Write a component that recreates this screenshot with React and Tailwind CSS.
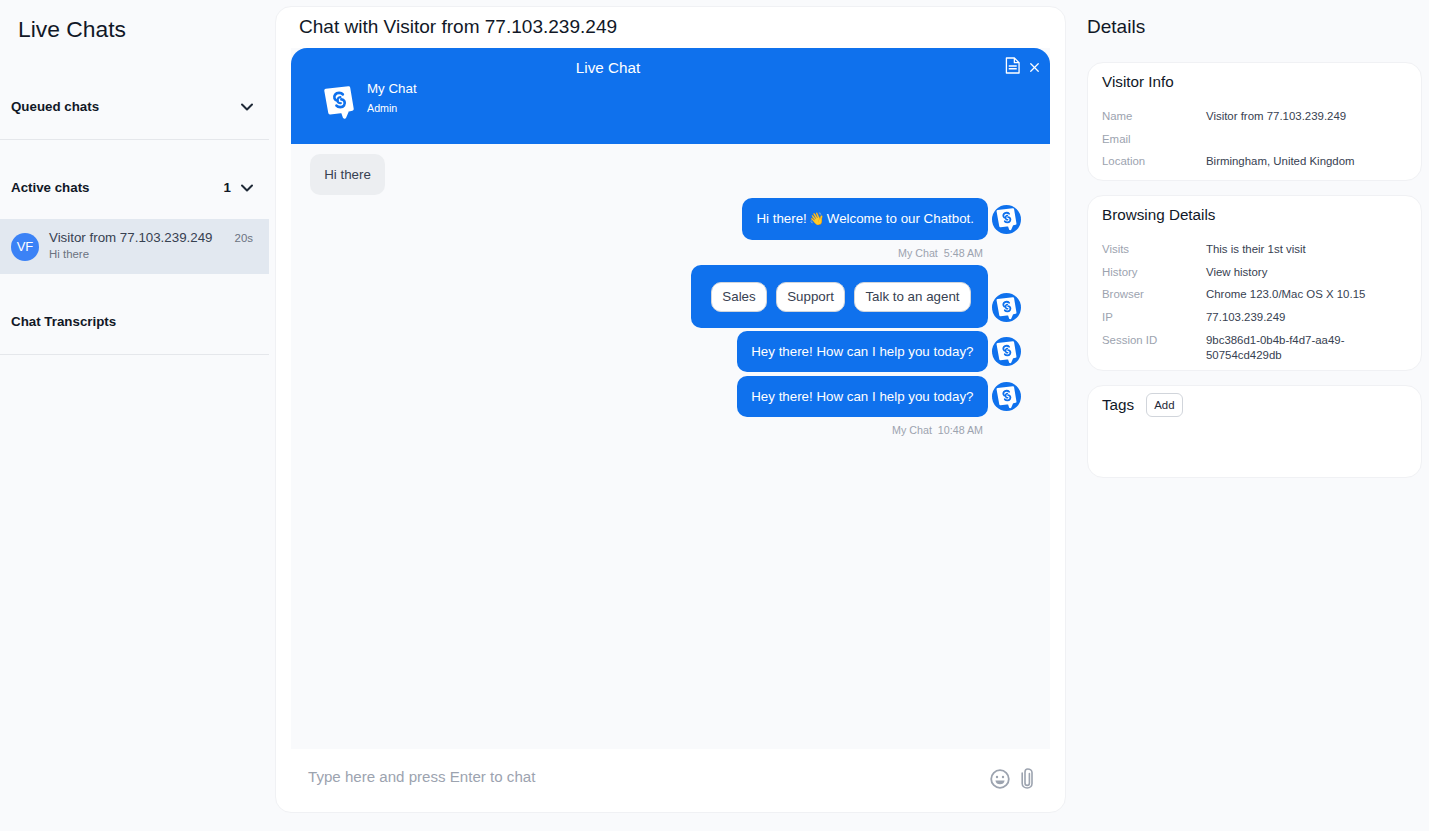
import React from "react";
import { ChevronDown, X } from "lucide-react";

function Logo({ size = 34, bg = "#fff", fg = "#0f71ed" }) {
  return (
    <svg width={size} height={size * 38 / 34} viewBox="0 0 34 38" className="shrink-0">
      <path d="M4 7.5 L26.5 5 L30 26 L25.5 27 L22.5 34 L20.5 28.2 L8 29.8 Z" fill={bg} stroke={bg} strokeWidth="3.5" strokeLinejoin="round" />
      <path d="M20.8 11.4 C19.4 9.6 15 9.2 13.2 11.6 C11.2 14.2 12.6 17.4 15.5 17.6" fill="none" stroke={fg} strokeWidth="2.7" strokeLinecap="round" />
      <path d="M14.5 22.6 C16.2 24.6 20.4 24.8 22 22.4 C23.8 19.6 22.2 16.4 19.4 16.4" fill="none" stroke={fg} strokeWidth="2.7" strokeLinecap="round" />
      <path d="M18.4 14.2 C16.4 14.3 15.4 15.6 15.5 17.6 C15.6 19.4 17 20.4 18.8 20.2" fill="none" stroke={fg} strokeWidth="2.2" strokeLinecap="round" />
    </svg>
  );
}

function BotAvatar() {
  return (
    <div className="w-[29px] h-[29px] rounded-full bg-[#0f71ed] flex items-center justify-center shrink-0">
      <Logo size={23} />
    </div>
  );
}

function Section({ title, right, h }) {
  return (
    <div className={`flex items-center justify-between pl-[11px] pr-[12px] ${h}`}>
      <span className="font-bold text-[13.33px] text-[#111827] leading-5">{title}</span>
      <div className="flex items-center gap-[6px]">
        {right && <span className="font-bold text-[13.33px] text-[#111827]">{right}</span>}
        {right !== null && <ChevronDown size={20} strokeWidth={2.4} className="text-[#1f2937]" />}
      </div>
    </div>
  );
}

function InfoRow({ label, value }) {
  return (
    <div className="flex items-start text-[11.43px] leading-[15px] py-[3.9px]">
      <div className="w-[104px] shrink-0 text-[#9ca3af]">{label}</div>
      <div className="text-[#374151] w-[160px]">{value}</div>
    </div>
  );
}

function Card({ className, children }) {
  return <div className={`bg-white border border-[#f0f1f4] rounded-[16px] px-[14px] ${className}`}>{children}</div>;
}

function Bubble({ children, className = "" }) {
  return (
    <div className={`bg-[#0f71ed] text-white text-[13.33px] leading-5 rounded-[10px] ${className}`}>{children}</div>
  );
}

function Reply({ children }) {
  return (
    <span className="bg-white text-[#374151] text-[13.33px] leading-5 rounded-[10px] border border-[#d1d5db] px-[10.5px] py-[4px]">{children}</span>
  );
}

export default function App() {
  return (
    <div className="w-[1429px] h-[831px] overflow-hidden bg-[#f9fafc] flex font-['Liberation_Sans',sans-serif] text-[#111827]">
      {/* Left */}
      <aside className="w-[269px] shrink-0 mr-[6px]">
        <h1 className="pl-[18px] pt-[14px] text-[22.86px] leading-[30px] text-[#111827] h-[75px]">Live Chats</h1>
        <div className="border-b border-[#e5e7eb] h-[65px]">
          <Section title="Queued chats" right="" h="h-[63px]" />
        </div>
        <div className="mt-[17px]">
          <Section title="Active chats" right="1" h="h-[62px]" />
          <div className="flex items-center bg-[#e2e8f0] h-[55px] pl-[11px] pr-[16px] pb-[2px]">
            <div className="w-[28px] h-[28px] mt-[2px] rounded-full bg-[#3b82f6] text-white text-[13px] flex items-center justify-center shrink-0">VF</div>
            <div className="ml-[10px] flex-1 min-w-0">
              <div className="text-[13.33px] leading-[17px] text-[#374151]">Visitor from 77.103.239.249</div>
              <div className="text-[11.43px] leading-[16px] text-[#6b7280]">Hi there</div>
            </div>
            <div className="text-[11.43px] text-[#6b7280] self-start mt-[11px]">20s</div>
          </div>
        </div>
        <div className="mt-[17px] border-b border-[#e5e7eb] h-[64px]">
          <Section title="Chat Transcripts" right={null} h="h-[62px]" />
        </div>
      </aside>

      {/* Center */}
      <main className="w-[791px] shrink-0 mt-[6px] h-[807px] bg-white border border-[#f0f1f4] rounded-[16px] px-[15px] flex flex-col">
        <h2 className="text-[19.05px] leading-[28px] text-[#111827] pl-[8px] pt-[6px] h-[41px]">Chat with Visitor from 77.103.239.249</h2>
        <div className="bg-[#f9fafc] h-[701px] flex flex-col shrink-0">
          <div className="relative h-[96px] bg-[#0f71ed] rounded-t-[16px] text-white shrink-0">
            <div className="text-center text-[15.24px] leading-5 pt-[10px] pr-[125px]">Live Chat</div>
            <div className="absolute left-[31px] top-[35px]"><Logo size={34} /></div>
            <div className="absolute left-[76px] top-[32px]">
              <div className="text-[13.33px] leading-[18px]">My Chat</div>
              <div className="text-[10.7px] leading-[14px] mt-[3px]">Admin</div>
            </div>
            <svg width="15" height="17" viewBox="0 0 16 18" fill="none" stroke="#fff" strokeWidth="1.4" className="absolute left-[714px] top-[9px]">
              <path d="M1.5 1 H10 L15 6 V17 H1.5 Z" strokeLinejoin="round" />
              <path d="M10 1 V6 H15" strokeLinejoin="round" />
              <path d="M4 9.5 H12.5 M4 12.5 H12.5" strokeWidth="1.6" />
            </svg>
            <X size={15} strokeWidth={2} className="absolute right-[8px] top-[12px]" />
          </div>
          <div className="flex-1 pl-[19px] pr-[29px] pt-[10px]">
            <div className="bg-[#eceef1] text-[#374151] text-[13.33px] leading-5 rounded-[10px] w-[75px] h-[41px] flex items-center justify-center">Hi there</div>
            <div className="flex justify-end items-center gap-[4px] mt-[3px]">
              <Bubble className="h-[42px] px-[14px] flex items-center">
                <span>Hi there!</span>
                <span className="text-[12.5px] mx-[2px] leading-none">👋</span>
                <span>Welcome to our Chatbot.</span>
              </Bubble>
              <BotAvatar />
            </div>
            <div className="text-right text-[10.7px] leading-[14px] text-[#9ca3af] pr-[38px] mt-[6px]">My Chat&nbsp; 5:48 AM</div>
            <div className="flex justify-end items-end gap-[4px] mt-[5px]">
              <Bubble className="h-[63px] pl-[20px] pr-[17px] flex items-center gap-[8.5px]">
                <Reply>Sales</Reply>
                <Reply>Support</Reply>
                <Reply>Talk to an agent</Reply>
              </Bubble>
              <div className="mb-[6px]"><BotAvatar /></div>
            </div>
            <div className="flex justify-end items-center gap-[4px] mt-[3px]">
              <Bubble className="h-[41px] px-[14.5px] flex items-center">Hey there! How can I help you today?</Bubble>
              <BotAvatar />
            </div>
            <div className="flex justify-end items-center gap-[4px] mt-[4px]">
              <Bubble className="h-[41px] px-[14.5px] flex items-center">Hey there! How can I help you today?</Bubble>
              <BotAvatar />
            </div>
            <div className="text-right text-[10.7px] leading-[14px] text-[#9ca3af] pr-[38px] mt-[6px]">My Chat&nbsp; 10:48 AM</div>
          </div>
        </div>
        <div className="flex-1 flex items-center pl-[17px] pr-[17px] pb-[6px]">
          <span className="text-[15.1px] text-[#9ca3af] flex-1">Type here and press Enter to chat</span>
          <svg width="20" height="20" viewBox="0 0 20 20" fill="none" stroke="#9ca3af" strokeWidth="1.8" className="mr-[11px] mt-[2px]">
            <circle cx="10" cy="10" r="8.8" />
            <circle cx="7" cy="8" r="1.2" fill="#9ca3af" stroke="none" />
            <circle cx="13" cy="8" r="1.2" fill="#9ca3af" stroke="none" />
            <path d="M5.4 11.4 H14.6 C14.2 14 12.4 15.2 10 15.2 C7.6 15.2 5.8 14 5.4 11.4 Z" fill="#9ca3af" stroke="none" />
          </svg>
          <svg width="12" height="21" viewBox="0 0 12 21" fill="none" stroke="#9ca3af" strokeWidth="1.6" strokeLinecap="round" className="mt-[2px]">
            <path d="M8.4 5.5 V15 C8.4 16.5 7.4 17.4 6.2 17.4 C5 17.4 4 16.5 4 15 V4 C4 2.3 5 1 6.7 1 C8.9 1 11 2.4 11 4.5 V15.5 C11 18.2 8.9 20 6.2 20 C3.4 20 1.2 18.2 1.2 15.5 V5" />
          </svg>
        </div>
      </main>

      {/* Right */}
      <aside className="ml-[21px] w-[335px] shrink-0">
        <h2 className="text-[19.05px] leading-[28px] pt-[13px] h-[62px]">Details</h2>
        <Card className="h-[119px] pt-[9px]">
          <h3 className="text-[15.24px] leading-5 mb-[13px]">Visitor Info</h3>
          <InfoRow label="Name" value="Visitor from 77.103.239.249" />
          <InfoRow label="Email" value="" />
          <InfoRow label="Location" value="Birmingham, United Kingdom" />
        </Card>
        <Card className="h-[176px] pt-[9px] mt-[14px]">
          <h3 className="text-[15.24px] leading-5 mb-[13px]">Browsing Details</h3>
          <InfoRow label="Visits" value="This is their 1st visit" />
          <InfoRow label="History" value="View history" />
          <InfoRow label="Browser" value="Chrome 123.0/Mac OS X 10.15" />
          <InfoRow label="IP" value="77.103.239.249" />
          <InfoRow label="Session ID" value="9bc386d1-0b4b-f4d7-aa49-50754cd429db" />
        </Card>
        <Card className="h-[93px] pt-[7px] mt-[14px]">
          <div className="flex items-center gap-[12px]">
            <h3 className="text-[15.24px] leading-5">Tags</h3>
            <span className="border border-[#d1d5db] rounded-[6px] text-[11.43px] leading-4 px-[7px] py-[3px] text-[#1f2937]">Add</span>
          </div>
        </Card>
      </aside>
    </div>
  );
}
